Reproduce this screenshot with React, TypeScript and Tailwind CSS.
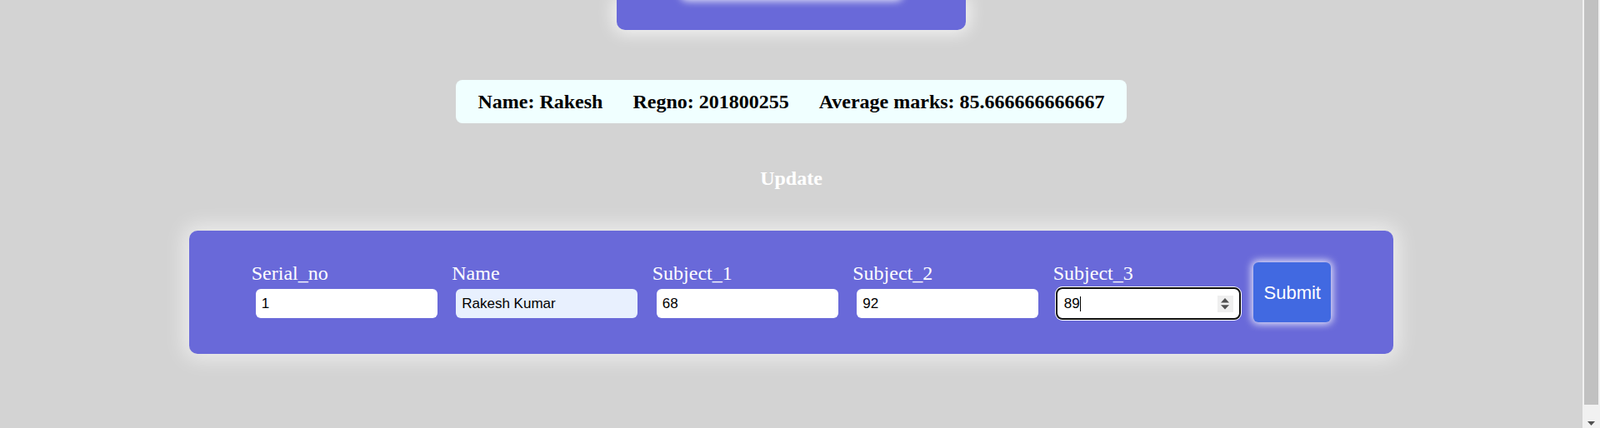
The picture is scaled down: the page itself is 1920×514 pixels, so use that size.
import React from "react";

const serif = "font-['Liberation_Serif','Times_New_Roman',serif]";
const sans = "font-['Liberation_Sans',Arial,sans-serif]";

function Field({ label, value, bg }: { label: string; value: string; bg?: string }) {
  return (
    <div className="flex flex-col w-[223px]">
      <label className={`${serif} text-[24px] leading-[27px] text-white`}>{label}</label>
      <input
        readOnly
        defaultValue={value}
        className={`${sans} mt-[5px] ml-[5px] w-[218px] h-[35px] rounded-[6px] border-0 outline-none pl-[7px] text-[17px] text-black ${bg ?? "bg-white"}`}
      />
    </div>
  );
}

function FocusedField({ label, value }: { label: string; value: string }) {
  return (
    <div className="flex flex-col w-[223px]">
      <label className={`${serif} text-[24px] leading-[27px] text-white`}>{label}</label>
      <div
        className={`${sans} mt-[5px] ml-[5px] w-[218px] h-[35px] rounded-[6px] bg-white flex items-center pl-[8px] pr-[7px] text-[17px] text-black outline-2 outline-[#101010] shadow-[0_0_0_3px_white]`}
      >
        <span>{value}</span>
        <span className="w-[1px] h-[18px] bg-black" />
        <span className="flex-1" />
        <span className="w-[19px] h-[20px] bg-[#efefef] flex items-center justify-center">
          <svg width="10" height="14" viewBox="0 0 10 14">
            <path d="M5 0 L10 5.4 L0 5.4 Z" fill="#505050" />
            <path d="M0 8.2 L10 8.2 L5 13.6 Z" fill="#505050" />
          </svg>
        </span>
      </div>
    </div>
  );
}

export default function App() {
  return (
    <div className="flex w-full h-[514px] overflow-hidden bg-[#d3d3d3]">
      <main className="flex-1 flex flex-col items-center">
        <div className="flex flex-col items-center w-[419px] h-[36px] shrink-0 bg-[#6969d9] rounded-b-[10px] shadow-[0_0_20px_4px_rgba(255,255,255,0.75)]">
          <div className="w-[262px] h-[40px] -mt-[42px] rounded-[6px] bg-[#4169e1] shadow-[0_0_10px_3px_rgba(255,255,255,0.85)]" />
        </div>

        <div
          className={`${serif} mt-[60px] flex items-center h-[52px] px-[26px] gap-[36px] rounded-[8px] bg-[#f0ffff] font-bold text-[24px] text-black`}
        >
          <span>Name: Rakesh</span>
          <span>Regno: 201800255</span>
          <span>Average marks: 85.666666666667</span>
        </div>

        <h2 className={`${serif} mt-[53px] font-bold text-[24px] leading-[27px] text-white`}>Update</h2>

        <div className="mt-[49px] w-[1445px] h-[148px] shrink-0 pt-[38px] flex items-start justify-center gap-[17.5px] rounded-[10px] bg-[#6969d9] shadow-[0_0_25px_6px_rgba(255,255,255,0.6)]">
          <Field label="Serial_no" value="1" />
          <Field label="Name" value="Rakesh Kumar" bg="bg-[#e8f0fe]" />
          <Field label="Subject_1" value="68" />
          <Field label="Subject_2" value="92" />
          <FocusedField label="Subject_3" value="89" />
          <button
            className={`${sans} w-[93px] h-[72px] rounded-[6px] bg-[#4169e1] text-white text-[22px] shadow-[0_0_10px_2px_rgba(255,255,255,0.85)]`}
          >
            Submit
          </button>
        </div>
      </main>

      <div className="w-[21px] h-full shrink-0 bg-[#f1f1f1] flex flex-col">
        <div className="ml-[2px] w-[17px] h-[486px] bg-[#c1c1c1]" />
        <div className="flex justify-center pt-[20px]">
          <svg width="9" height="5" viewBox="0 0 9 5">
            <path d="M0 0 L9 0 L4.5 5 Z" fill="#505050" />
          </svg>
        </div>
      </div>
    </div>
  );
}
